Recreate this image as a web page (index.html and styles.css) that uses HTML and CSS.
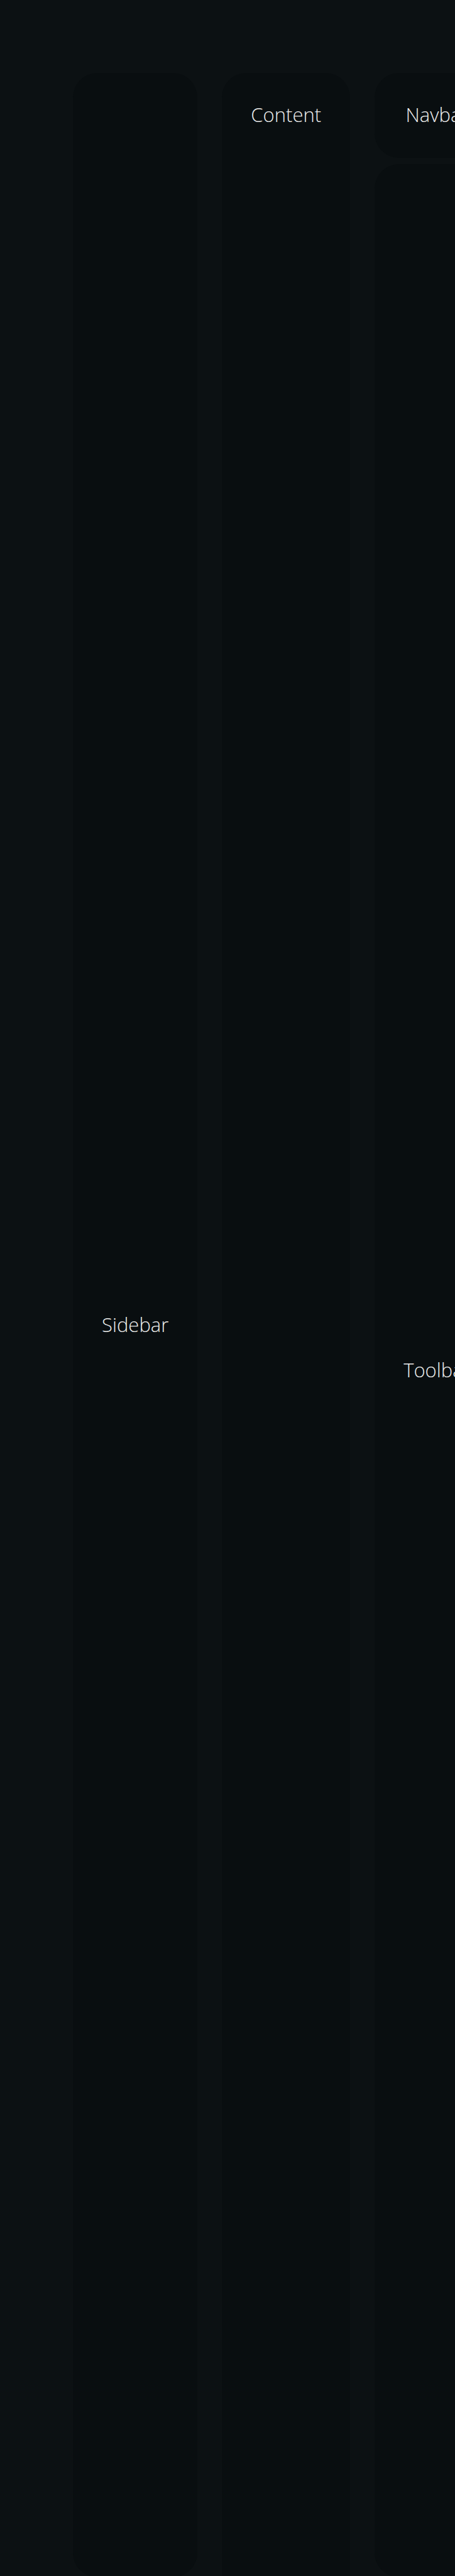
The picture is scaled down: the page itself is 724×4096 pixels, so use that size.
FILE: index.html
```
<!DOCTYPE html>
<html lang="en">
<head>
<meta charset="utf-8">
<meta name="viewport" content="width=device-width, initial-scale=1">
<title>Layout</title>
<link rel="stylesheet" href="styles.css">
</head>
<body>
<div class="layout">
  <aside class="panel">Sidebar</aside>
  <main class="panel panel-content">Content</main>
  <div class="column">
    <nav class="panel">Navbar</nav>
    <section class="panel panel-fill">Toolbar</section>
  </div>
</div>
</body>
</html>
```
FILE: styles.css
```
* {
  box-sizing: border-box;
}

body {
  margin: 0;
  height: 100vh;
  overflow: hidden;
  background: #0c1113;
  color: #ececec;
  font-family: "Open Sans", "Noto Sans", sans-serif;
  font-size: 31px;
  font-weight: 300;
  line-height: 42px;
}

.layout {
  display: flex;
  gap: 39px;
  height: calc(100vh + 2px);
  padding: 116px 0 0 116px;
}

.panel {
  display: flex;
  flex-shrink: 0;
  align-items: center;
  justify-content: center;
  padding: 45px 46px 48px;
  border-radius: 39px;
  background: #090e10;
}

.panel-content {
  align-items: flex-start;
  height: 100vh;
}

.column {
  display: flex;
  flex-direction: column;
  flex-shrink: 0;
  gap: 10px;
}

.panel-fill {
  flex: 1;
}
```
